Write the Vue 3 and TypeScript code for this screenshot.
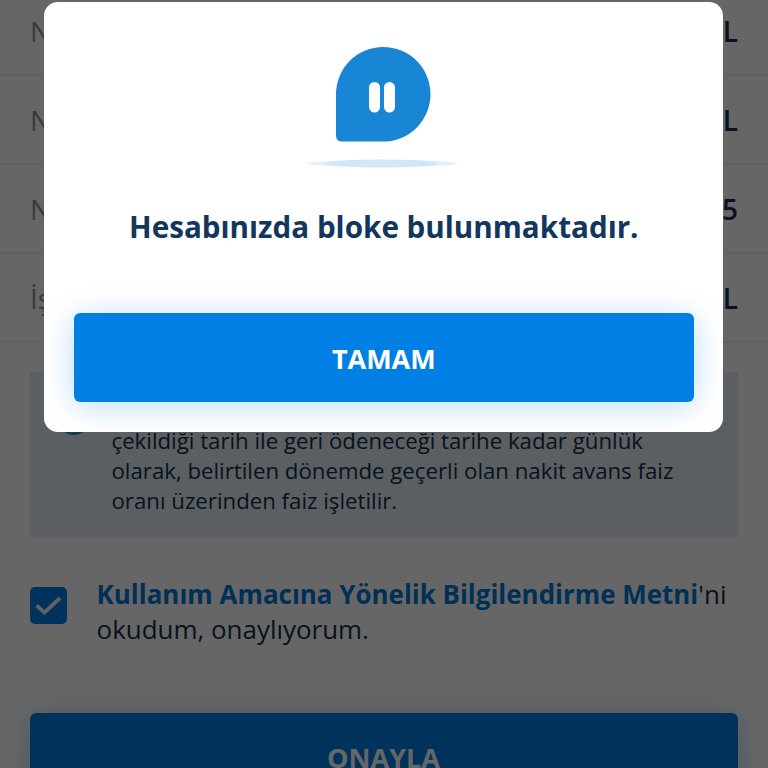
<script setup lang="ts">
interface Row {
  label: string
  value: string
}

const rows: Row[] = [
  { label: 'N', value: 'L' },
  { label: 'N', value: 'L' },
  { label: 'N', value: '5' },
  { label: 'İş', value: 'L' },
]

const infoLines: string[] = [
  'çekildiği tarih ile geri ödeneceği tarihe kadar günlük',
  'olarak, belirtilen dönemde geçerli olan nakit avans faiz',
  'oranı üzerinden faiz işletilir.',
]
</script>

<template>
  <div class="screen">
    <main class="page">
      <dl class="rows">
        <div v-for="(row, i) in rows" :key="i" class="row">
          <dt>{{ row.label }}</dt>
          <dd>{{ row.value }}</dd>
        </div>
      </dl>

      <section class="info">
        <span class="info-icon"></span>
        <p class="info-text">
          <span v-for="line in infoLines" :key="line">{{ line }}</span>
        </p>
      </section>

      <div class="consent">
        <span class="check">
          <svg viewBox="0 0 37 37" width="37" height="37">
            <path d="M6.500 18.500 L14.500 25.500 L30 11" fill="none" stroke="#f4f4f4" stroke-width="3.800" />
          </svg>
        </span>
        <p class="consent-text">
          <span><b>Kullanım Amacına Yönelik Bilgilendirme Metni</b>'ni</span>
          <span>okudum, onaylıyorum.</span>
        </p>
      </div>

      <button class="button submit" type="button"><span>ONAYLA</span></button>
    </main>

    <div class="overlay">
      <div class="modal" role="dialog">
        <svg class="art" viewBox="0 0 150 124" width="150" height="124">
          <path
            d="M76.250 1 A47.250 47.250 0 0 1 76.250 95.500 H35 Q29 95.500 29 89.500 V48.250 A47.250 47.250 0 0 1 76.250 1 Z"
            fill="#1985d5"
          />
          <rect x="62" y="36" width="11" height="30.500" rx="5.500" fill="#fff" />
          <rect x="77" y="36" width="11" height="30.500" rx="5.500" fill="#fff" />
          <ellipse cx="75" cy="117.500" rx="75" ry="3.500" fill="#e2f0fb" />
          <ellipse cx="75" cy="117.500" rx="56" ry="4" fill="#d1e7f8" />
        </svg>
        <h1 class="title"><span>Hesabınızda bloke bulunmaktadır.</span></h1>
        <button class="button confirm" type="button"><span>TAMAM</span></button>
      </div>
    </div>
  </div>
</template>

<style>
body {
  margin: 0;
  overflow: hidden;
}
</style>

<style scoped>
.screen {
  position: relative;
  width: 768px;
  height: 768px;
  overflow: hidden;
  background: #fff;
  font-family: 'Open Sans', 'Noto Sans', sans-serif;
  color: #12304f;
}
.rows,
dd,
p,
h1 {
  margin: 0;
}
.rows {
  margin-top: -13px;
}
.row {
  display: flex;
  justify-content: space-between;
  align-items: center;
  box-sizing: border-box;
  height: 89px;
  padding: 1px 30px 0;
  border-bottom: 2px solid #f0f0f0;
  font-size: 28px;
  line-height: 36px;
}
dt {
  color: #8b95a2;
}
dd {
  font-weight: 600;
}
.info {
  display: flex;
  box-sizing: border-box;
  height: 165px;
  margin: 29px 30px 0;
  padding: 21.500px 28px;
  border-radius: 3px;
  background: #e4edf3;
}
.info-icon {
  width: 34px;
  height: 34px;
  margin: 7px 20.500px 0 -1px;
  border-radius: 50%;
  background: #3b93bd;
}
.info-text {
  display: flex;
  flex-direction: column;
  justify-content: flex-end;
  height: 123px;
  font-size: 22.230px;
  line-height: 30.200px;
  white-space: nowrap;
}
.consent {
  display: flex;
  gap: 29.600px;
  margin: 40px 30px 0;
}
.check {
  width: 37px;
  height: 37px;
  margin-top: 10px;
  border-radius: 5px;
  background: #007fe5;
}
.check svg {
  display: block;
}
.consent-text {
  display: flex;
  flex-direction: column;
  font-size: 25.940px;
  line-height: 35.400px;
  white-space: nowrap;
}
.consent-text b {
  color: #0078d7;
}
.button {
  display: flex;
  align-items: center;
  justify-content: center;
  box-sizing: border-box;
  height: 89px;
  padding: 0;
  border: 0;
  border-radius: 6px;
  background: #007fe5;
  color: #fff;
  font: 700 27px/36px 'Open Sans', 'Noto Sans', sans-serif;
  box-shadow: 0 4px 30px rgba(0, 127, 229, 0.27);
}
.submit {
  width: 708px;
  margin: 65.200px 30px 0;
  padding-right: 1px;
}
.overlay {
  position: absolute;
  inset: 0;
  display: flex;
  justify-content: center;
  align-items: flex-start;
  padding: 2px 0.400px 0 0;
  background: rgba(0, 0, 0, 0.6);
}
.modal {
  display: flex;
  flex-direction: column;
  align-items: center;
  box-sizing: border-box;
  width: 679px;
  height: 430px;
  padding: 44px 29.500px 0;
  border-radius: 14px;
  background: #fff;
  overflow: hidden;
}
.art {
  flex: none;
  margin-right: 3px;
}
.title {
  margin-top: 37px;
  font-size: 29.640px;
  line-height: 40px;
  font-weight: 700;
  color: #12365e;
  white-space: nowrap;
}
.confirm {
  width: 620px;
  margin-top: 66px;
  padding-top: 2px;
}
</style>
